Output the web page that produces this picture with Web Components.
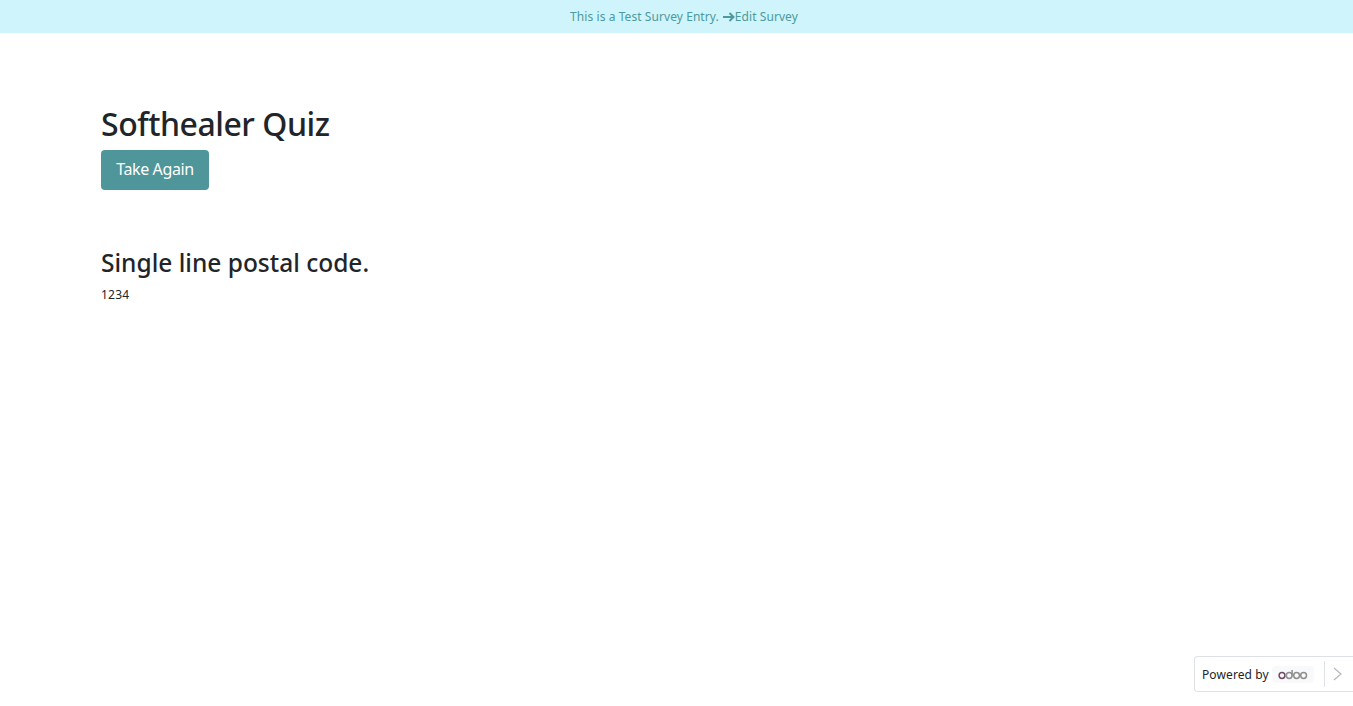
<!DOCTYPE html>
<html lang="en">
<head>
<meta charset="utf-8">
<title>Softhealer Quiz</title>
<style>
  html, body { margin: 0; height: 100%; background: #fff; }
  body { font-family: "Noto Sans", sans-serif; color: #212529; }
</style>
</head>
<body>
<test-banner>This is a Test Survey Entry. <a slot="link">Edit Survey</a></test-banner>
<survey-result>
  <span slot="title">Softhealer Quiz</span>
  <span slot="action">Take Again</span>
  <survey-answer>
    <span slot="question">Single line postal code.</span>
    1234
  </survey-answer>
</survey-result>
<powered-by></powered-by>

<script>
class TestBanner extends HTMLElement {
  constructor() {
    super();
    this.attachShadow({ mode: "open" });
    this.shadowRoot.innerHTML = `
    <style>
      :host {
        display: flex;
        justify-content: center;
        align-items: center;
        height: 33px;
        padding-left: 15px;
        background: #cff4fc;
        color: #4c9a9d;
        font-size: 12px;
        letter-spacing: .07px;
      }
      svg { margin: 1px 0 0 4px; }
      ::slotted(a) { color: #4c9a9d; }
    </style>
    <slot></slot>
    <svg width="12" height="10" viewBox="0 0 12 10" fill="none" stroke="#4c9a9d" stroke-width="2">
      <path d="M0 5H10M6.5 1L10.5 5L6.5 9"/>
    </svg>
    <slot name="link"></slot>`;
  }
}

class SurveyResult extends HTMLElement {
  constructor() {
    super();
    this.attachShadow({ mode: "open" });
    this.shadowRoot.innerHTML = `
    <style>
      :host { display: block; padding: 72px 101px 0; }
      h1 {
        margin: 0 0 7px;
        font-size: 32px;
        font-weight: 500;
        line-height: 38px;
        letter-spacing: -.47px;
        color: #212529;
      }
      button {
        display: block;
        width: 108px;
        height: 40px;
        padding: 0 0 2px;
        border: 0;
        border-radius: 4px;
        background: #4e9699;
        color: #fff;
        font: 16px "Noto Sans", sans-serif;
        letter-spacing: -.4px;
      }
      .answers { margin-top: 58px; }
    </style>
    <h1><slot name="title"></slot></h1>
    <button><slot name="action"></slot></button>
    <div class="answers"><slot></slot></div>`;
  }
}

class SurveyAnswer extends HTMLElement {
  constructor() {
    super();
    this.attachShadow({ mode: "open" });
    this.shadowRoot.innerHTML = `
    <style>
      :host { display: block; font-size: 12px; line-height: 18px; color: #212529; letter-spacing: .25px; }
      h3 {
        margin: 0 0 9px;
        font-size: 24.5px;
        font-weight: 500;
        line-height: 29px;
        letter-spacing: 0;
      }
    </style>
    <h3><slot name="question"></slot></h3>
    <slot></slot>`;
  }
}

class PoweredBy extends HTMLElement {
  constructor() {
    super();
    this.attachShadow({ mode: "open" });
    this.shadowRoot.innerHTML = `
    <style>
      :host {
        position: fixed;
        right: 0;
        top: 656px;
        width: 159px;
        height: 36px;
        box-sizing: border-box;
        display: flex;
        align-items: center;
        padding-left: 7px;
        background: #fff;
        border: 1px solid #dee2e6;
        border-right: 0;
        border-radius: 4px 0 0 4px;
        font-size: 12px;
        letter-spacing: .1px;
        color: #212529;
      }
      .logo {
        display: flex;
        align-items: center;
        justify-content: center;
        width: 42px;
        height: 17px;
        margin-left: 3px;
        background: #f8f9fa;
        border-radius: 4px;
      }
      .sep { width: 1px; height: 26px; background: #dee2e6; margin-left: 10px; }
      svg.chev { margin-left: 8px; }
    </style>
    <span>Powered by</span>
    <span class="logo">
      <svg width="30" height="11" viewBox="0 0 30 11" fill="none" stroke-width="1.5">
        <circle cx="4" cy="6.5" r="2.9" stroke="#714b67"/>
        <circle cx="11.2" cy="6.5" r="2.9" stroke="#8f8f8f"/>
        <path d="M14.1 1V6.5" stroke="#8f8f8f"/>
        <circle cx="18.6" cy="6.5" r="2.9" stroke="#8f8f8f"/>
        <circle cx="25.6" cy="6.5" r="2.9" stroke="#8f8f8f"/>
      </svg>
    </span>
    <span class="sep"></span>
    <svg class="chev" width="9" height="14" viewBox="0 0 9 14" fill="none" stroke="#b5b8bb" stroke-width="1.2">
      <path d="M1 1l7 6-7 6"/>
    </svg>`;
  }
}

customElements.define("test-banner", TestBanner);
customElements.define("survey-result", SurveyResult);
customElements.define("survey-answer", SurveyAnswer);
customElements.define("powered-by", PoweredBy);
</script>
</body>
</html>
